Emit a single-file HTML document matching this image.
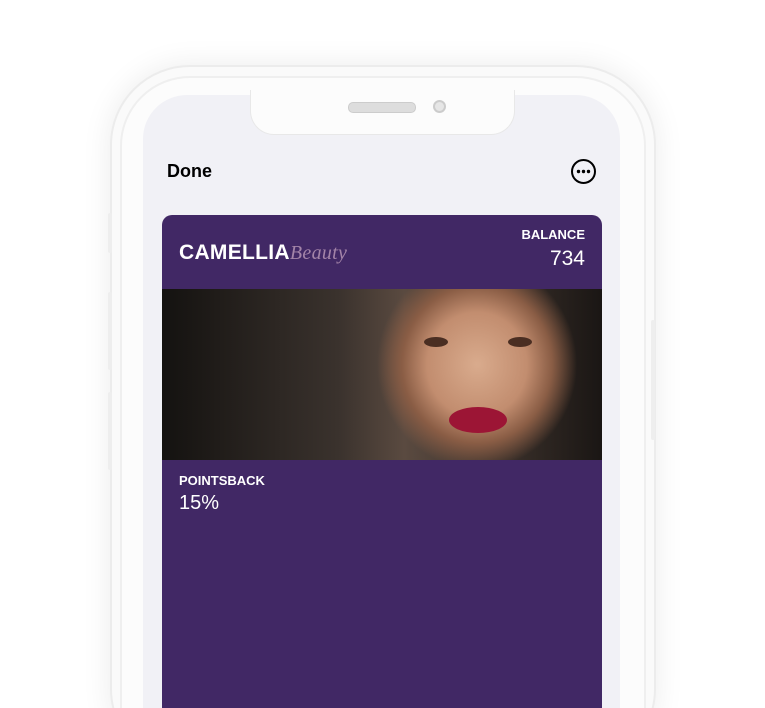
<!DOCTYPE html>
<html><head><meta charset="utf-8"><style>
html,body{margin:0;height:708px;overflow:hidden}
body{width:765px;background:#fff;font-family:"Liberation Sans",sans-serif}
.wrap{position:relative;width:765px;height:708px;overflow:hidden}
.phone{position:absolute;left:110px;top:65px;width:542px;height:700px;border-radius:80px;background:#fafafa;border:2px solid #ececec;box-shadow:0 0 30px rgba(0,0,0,.08)}
.inner{position:absolute;left:120px;top:76px;width:522px;height:700px;border-radius:70px;border:2px solid #efefef;background:#fcfcfc}
.screen{position:absolute;left:143px;top:95px;width:477px;height:700px;border-radius:44px;background:#f1f1f6;overflow:hidden}
.notch{position:absolute;left:250px;top:90px;width:263px;height:44px;background:#fcfcfc;border-radius:0 0 24px 24px;border:1px solid #e8e8e8;border-top:none}
.spk{position:absolute;left:348px;top:102px;width:66px;height:9px;border-radius:5px;background:#ddd;border:1px solid #ccc}
.cam{position:absolute;left:433px;top:100px;width:9px;height:9px;border-radius:50%;border:2px solid #ccc;background:#e6e6e6}
.btn{position:absolute;width:4px;background:#eee;border-radius:2px}
.done{position:absolute;left:167px;top:161px;font-weight:bold;font-size:18px;color:#000}
.more{position:absolute;left:571px;top:159px;width:21px;height:21px;border:2px solid #000;border-radius:50%}
.card{position:absolute;left:162px;top:215px;width:440px;height:520px;background:#412865;border-radius:10px;overflow:hidden}
.logo{position:absolute;left:17px;top:26px;color:#fff;font-weight:bold;font-size:21px;letter-spacing:.3px}
.logo i{font-family:"Liberation Serif",serif;font-weight:normal;color:#a384a8;font-size:20px}
.bal{position:absolute;right:17px;top:12px;color:#fff;text-align:right;font-size:13px;font-weight:bold}
.bal b{display:block;font-weight:normal;font-size:21px;margin-top:5px}
.photo{position:absolute;left:0;top:74px;width:440px;height:171px;overflow:hidden;background:linear-gradient(90deg,#141210 0%,#3a322d 40%,#5a4a40 55%,#1a1614 100%)}
.face{position:absolute;left:215px;top:-10px;width:200px;height:190px;background:radial-gradient(ellipse 50% 55% at 50% 45%,#d9ab8d 0%,#c28d6f 50%,#8a5d45 75%,rgba(60,45,35,0) 100%)}
.lip{position:absolute;left:287px;top:118px;width:58px;height:26px;border-radius:50%;background:#9c1535}
.eye{position:absolute;top:48px;width:24px;height:10px;border-radius:50%;background:#4a2e22}
.pts{position:absolute;left:17px;top:258px;color:#fff;font-size:13px;font-weight:bold}
.pts b{display:block;font-weight:normal;font-size:20px;margin-top:4px}
</style></head><body><div class="wrap">
<div class="phone"></div>
<div class="btn" style="left:108px;top:213px;height:40px"></div>
<div class="btn" style="left:108px;top:292px;height:78px"></div>
<div class="btn" style="left:108px;top:392px;height:78px"></div>
<div class="btn" style="left:651px;top:320px;height:120px"></div>
<div class="inner"></div>
<div class="screen"></div>
<div class="notch"></div>
<div class="spk"></div><div class="cam"></div>
<div class="done">Done</div>
<div class="more"><svg width="21" height="21" viewBox="0 0 21 21"><circle cx="5.5" cy="10.5" r="1.7"/><circle cx="10.5" cy="10.5" r="1.7"/><circle cx="15.5" cy="10.5" r="1.7"/></svg></div>
<div class="card">
<div class="logo">CAMELLIA<i>Beauty</i></div>
<div class="bal">BALANCE<b>734</b></div>
<div class="photo"><div class="face"></div><div class="eye" style="left:262px"></div><div class="eye" style="left:346px"></div><div class="lip"></div></div>
<div class="pts">POINTSBACK<b>15%</b></div>
</div>
</div></body></html>
